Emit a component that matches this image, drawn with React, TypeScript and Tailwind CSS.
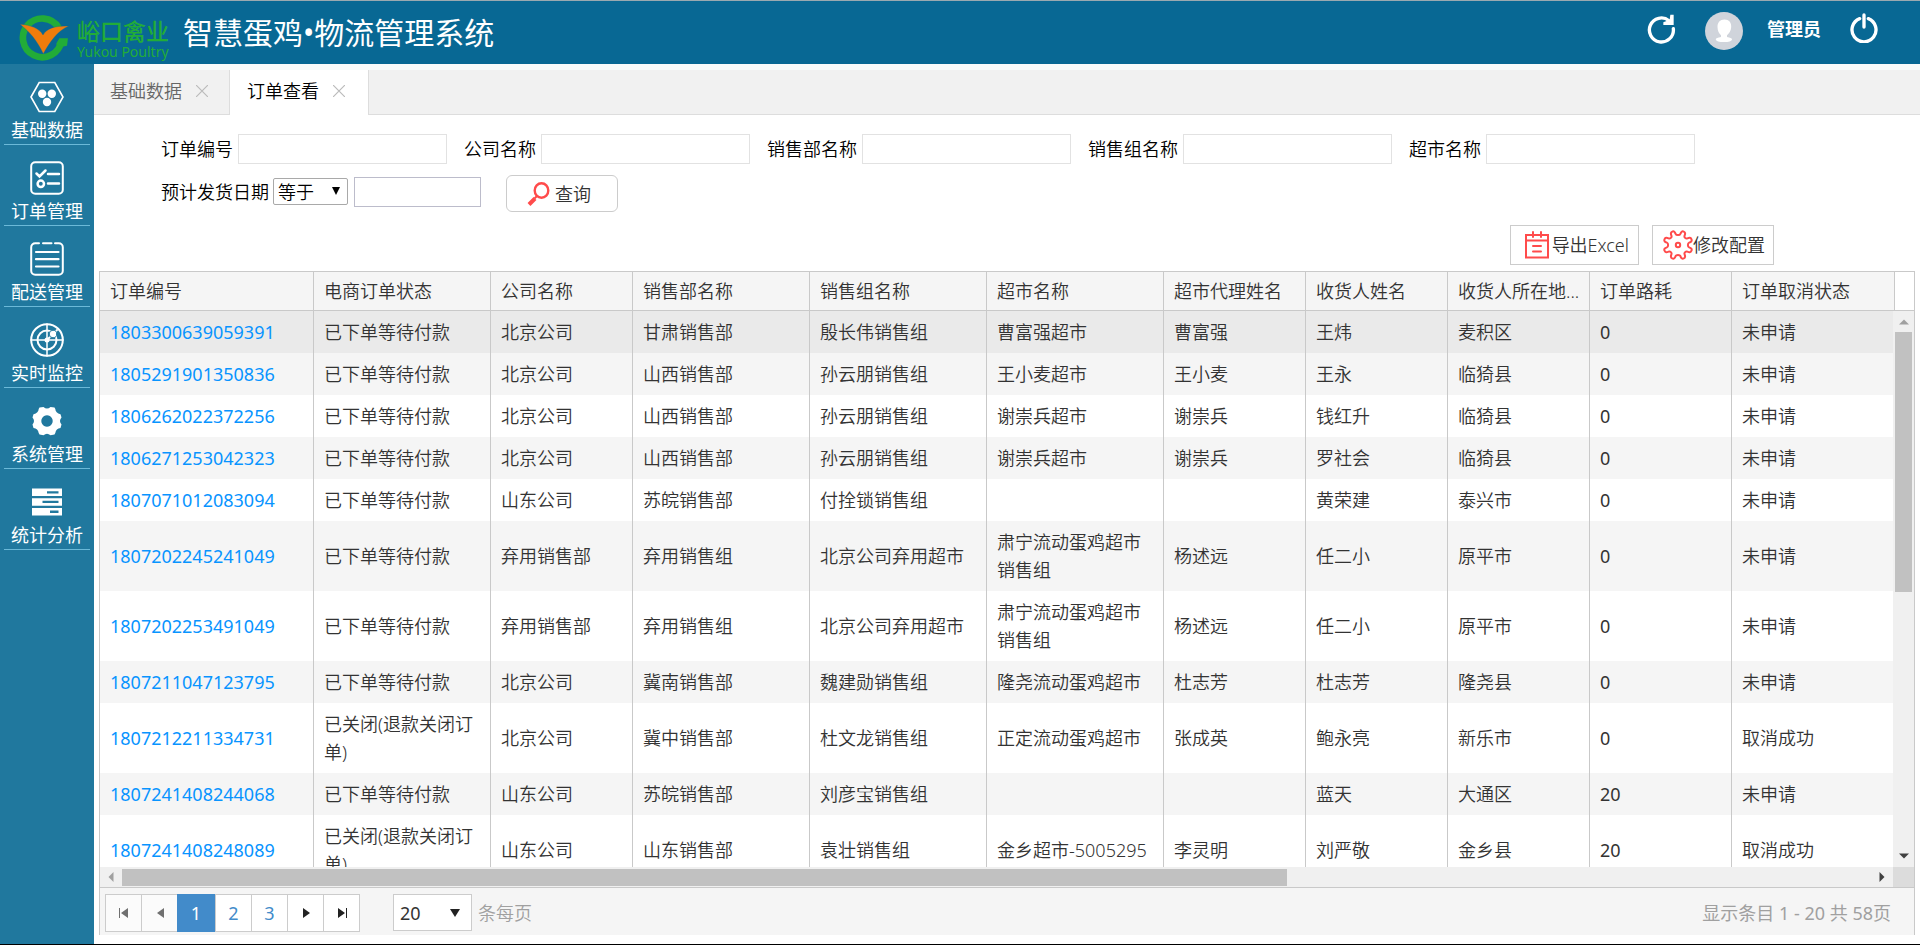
import { InputHTMLAttributes, ReactNode } from 'react'

interface Order {
  id: string
  status: string
  company: string
  department: string
  group: string
  market: string
  agent: string
  receiver: string
  region: string
  loss: number
  cancel: string
}

const columns: { key: keyof Order; title: string; width?: string; cell?: string }[] = [
  { key: 'id', title: '订单编号', width: 'w-[213px]', cell: 'font-normal' },
  { key: 'status', title: '电商订单状态', width: 'w-[177px]' },
  { key: 'company', title: '公司名称', width: 'w-[142px]' },
  { key: 'department', title: '销售部名称', width: 'w-[177px]' },
  { key: 'group', title: '销售组名称', width: 'w-[177px]' },
  { key: 'market', title: '超市名称', width: 'w-[177px]' },
  { key: 'agent', title: '超市代理姓名', width: 'w-[142px]' },
  { key: 'receiver', title: '收货人姓名', width: 'w-[142px]' },
  { key: 'region', title: '收货人所在地...', width: 'w-[142px]' },
  { key: 'loss', title: '订单路耗', width: 'w-[142px]', cell: 'font-normal' },
  { key: 'cancel', title: '订单取消状态' },
]

const WAITING = '已下单等待付款'
const CLOSED = '已关闭(退款关闭订单)'

const toOrder = (row: string[]): Order => ({
  id: row[0],
  status: row[1],
  company: row[2],
  department: row[3],
  group: row[4],
  market: row[5],
  agent: row[6],
  receiver: row[7],
  region: row[8],
  loss: Number(row[9]),
  cancel: row[10],
})

const orders = [
  ['1803300639059391', WAITING, '北京公司', '甘肃销售部', '殷长伟销售组', '曹富强超市', '曹富强', '王炜', '麦积区', '0', '未申请'],
  ['1805291901350836', WAITING, '北京公司', '山西销售部', '孙云朋销售组', '王小麦超市', '王小麦', '王永', '临猗县', '0', '未申请'],
  ['1806262022372256', WAITING, '北京公司', '山西销售部', '孙云朋销售组', '谢崇兵超市', '谢崇兵', '钱红升', '临猗县', '0', '未申请'],
  ['1806271253042323', WAITING, '北京公司', '山西销售部', '孙云朋销售组', '谢崇兵超市', '谢崇兵', '罗社会', '临猗县', '0', '未申请'],
  ['1807071012083094', WAITING, '山东公司', '苏皖销售部', '付拴锁销售组', '', '', '黄荣建', '泰兴市', '0', '未申请'],
  ['1807202245241049', WAITING, '弃用销售部', '弃用销售组', '北京公司弃用超市', '肃宁流动蛋鸡超市销售组', '杨述远', '任二小', '原平市', '0', '未申请'],
  ['1807202253491049', WAITING, '弃用销售部', '弃用销售组', '北京公司弃用超市', '肃宁流动蛋鸡超市销售组', '杨述远', '任二小', '原平市', '0', '未申请'],
  ['1807211047123795', WAITING, '北京公司', '冀南销售部', '魏建勋销售组', '隆尧流动蛋鸡超市', '杜志芳', '杜志芳', '隆尧县', '0', '未申请'],
  ['1807212211334731', CLOSED, '北京公司', '冀中销售部', '杜文龙销售组', '正定流动蛋鸡超市', '张成英', '鲍永亮', '新乐市', '0', '取消成功'],
  ['1807241408244068', WAITING, '山东公司', '苏皖销售部', '刘彦宝销售组', '', '', '蓝天', '大通区', '20', '未申请'],
  ['1807241408248089', CLOSED, '山东公司', '山东销售部', '袁壮销售组', '金乡超市-5005295', '李灵明', '刘严敬', '金乡县', '20', '取消成功'],
].map(toOrder)

const menu: { label: string; icon: ReactNode }[] = [
  {
    label: '基础数据',
    icon: (
      <>
        <path d="M1 17 9.200 2.500h15.600L33 17l-8.200 14.500H9.200z" strokeWidth="1.600" />
        <g fill="currentColor" stroke="none">
          <circle cx="12.200" cy="13.800" r="4.200" />
          <circle cx="21.800" cy="13.800" r="4.200" />
          <circle cx="17" cy="22" r="4.200" />
        </g>
      </>
    ),
  },
  {
    label: '订单管理',
    icon: (
      <>
        <rect x="1.200" y="1.200" width="31.600" height="31.600" rx="4" />
        <path d="m6.500 12.500 3 3 6-6M18 13h11M18 22.500h11" strokeWidth="2.500" />
        <circle cx="10.800" cy="22.800" r="3.200" strokeWidth="2.500" />
      </>
    ),
  },
  {
    label: '配送管理',
    icon: (
      <>
        <path d="M9 1.200H5.200a4 4 0 0 0-4 4v23.600a4 4 0 0 0 4 4h23.600a4 4 0 0 0 4-4V5.200a4 4 0 0 0-4-4H25M13 1.200h8.500" />
        <path d="M6 10h22.500M6 17.200h22.500M6 24.500h22.500" strokeWidth="2.200" />
      </>
    ),
  },
  {
    label: '实时监控',
    icon: (
      <>
        <circle cx="17" cy="17" r="15.800" />
        <circle cx="17" cy="17" r="9.500" />
        <path d="M17 1v32M1 17h32" strokeWidth="1.500" />
        <path d="m17 17 10-10" />
        <circle cx="17" cy="17" r="2.500" fill="currentColor" stroke="none" />
        <circle cx="23" cy="11" r="3.800" fill="currentColor" stroke="#20789e" strokeWidth="1" />
      </>
    ),
  },
  {
    label: '系统管理',
    icon: (
      <path
        d="M9.500 3.500 13.500 3q3.500 3 7 0l4 .5.800 1.500q.2 4 5.200 5.200l1 3.300q-3 3.500 0 7l-1 3.500q-4.500.5-5.200 5L24.500 30.500l-4 .8q-3.500-3-7 0l-4-.8-.8-1.500q-.7-4.500-5.200-5l-1-3.500q3-3.500 0-7l1-3.300Q8.500 9 8.700 5zM17 11.300a5.700 5.700 0 1 0 .01 0z"
        fill="currentColor"
        fillRule="evenodd"
        stroke="none"
      />
    ),
  },
  {
    label: '统计分析',
    icon: (
      <path
        d="M2 3.500h30V11H2zM2 13.200h30v7.500H2zM2 23h30v7.500H2zM17 6.200v2.300h11.500V6.200zM12.500 15.800v2.300h16v-2.300zM20 25.600v2.300h8.500v-2.300z"
        fill="currentColor"
        fillRule="evenodd"
        stroke="none"
      />
    ),
  },
]

const filters = [
  { id: 'orderNo', label: '订单编号' },
  { id: 'company', label: '公司名称' },
  { id: 'department', label: '销售部名称' },
  { id: 'group', label: '销售组名称' },
  { id: 'market', label: '超市名称' },
]

const Logo = () => (
  <div className="flex items-center gap-2">
    <svg viewBox="57 44 150 138" className="w-[50px] h-[46px]">
      <path d="M176 82A58 58 0 1 0 184 122" fill="none" stroke="#22ac38" strokeWidth="20" />
      <path d="M168 132 178 114h26l-3 22-18 4z" fill="#22ac38" />
      <path
        d="M60 72C92 74 118 84 129 104 140 84 165 76 206 77 172 92 150 125 130 160 110 120 90 95 60 72z"
        fill="#f07c0b"
        stroke="#086894"
        strokeWidth="1"
      />
    </svg>
    <div className="pt-1 text-[#22ac38]">
      <div className="text-[23px] leading-6 font-medium">峪口禽业</div>
      <div className="text-sm leading-[18px]">Yukou Poultry</div>
    </div>
  </div>
)

const Header = () => (
  <header className="flex items-start justify-between h-16 shrink-0 border-t border-[#9aa9b0] bg-[#086894] text-white font-normal pl-[19px] pr-[41px]">
    <div className="flex items-center gap-[14px] h-full">
      <div className="pt-2.5">
        <Logo />
      </div>
      <h1 className="text-[30px] leading-10">智慧蛋鸡•物流管理系统</h1>
    </div>
    <div className="flex items-center h-[60px]">
      <button type="button" aria-label="刷新" className="mr-7 pb-1">
        <svg viewBox="440 40 90 90" className="size-[30px]">
          <path d="M519 84A36 36 0 1 1 506 60" fill="none" stroke="currentColor" strokeWidth="10" strokeLinecap="round" />
          <path d="M489 73v-8l19-8 2-15h10v31z" fill="currentColor" />
        </svg>
      </button>
      <svg viewBox="0 0 38 38" className="size-[38px]">
        <circle cx="19" cy="19" r="19" fill="#d0d4db" />
        <path
          d="M19.500 7.500c4.500 0 7 3 6.700 7.500-.2 4-2.200 6.500-4.200 8.300v1.700c3 .4 5 1.200 5 2.500 0 1.600-3.500 2.600-8 2.600s-8.200-1-8.200-2.600c0-1.300 2-2.100 5.200-2.500v-1.700c-2-1.800-3.400-4.300-3.500-8.300-.1-4.500 2.500-7.500 7-7.500z"
          fill="#fff"
        />
      </svg>
      <span className="ml-6 pb-1 text-lg leading-6 font-bold">管理员</span>
      <button type="button" aria-label="退出" className="ml-7 pb-1.5">
        <svg viewBox="1046 36 90 90" className="size-[30px]">
          <path d="M1078 53A36 36 0 1 0 1104 53M1091 42v36" fill="none" stroke="currentColor" strokeWidth="10" strokeLinecap="round" />
        </svg>
      </button>
    </div>
  </header>
)

const Sidebar = () => (
  <nav className="w-[94px] shrink-0 bg-[#20789e] px-1 text-white font-normal">
    {menu.map(item => (
      <a
        key={item.label}
        href="#"
        className="flex flex-col items-center h-[81px] pt-4 gap-1 border-b border-[#6bb9d8] text-lg leading-6"
      >
        <svg viewBox="0 0 34 34" fill="none" stroke="currentColor" strokeWidth="2" strokeLinecap="round" className="size-[34px]">
          {item.icon}
        </svg>
        {item.label}
      </a>
    ))}
  </nav>
)

const CloseIcon = () => (
  <svg viewBox="0 0 12 12" stroke="#bbb" strokeWidth="1.200" className="size-3">
    <path d="m0 0 12 12M12 0 0 12" />
  </svg>
)

const Tab = ({ label, active }: { label: string; active?: boolean }) => (
  <div
    className={
      active
        ? 'flex items-center gap-[14px] h-[45px] pl-[17px] pr-[23px] pb-[3px] border-r border-[#ddd] bg-white text-black'
        : 'flex items-center gap-[14px] h-[45px] pl-4 pr-[21px] pb-0.5 border-r border-b border-[#ddd] text-[#666]'
    }
  >
    <button type="button" role="tab" aria-selected={!!active} className="text-lg leading-6">
      {label}
    </button>
    <button type="button" aria-label={`关闭${label}`}>
      <CloseIcon />
    </button>
  </div>
)

const Field = ({ id, label, ...props }: { label: string } & InputHTMLAttributes<HTMLInputElement>) => (
  <div className="flex items-center gap-[5px]">
    <label htmlFor={id}>{label}</label>
    <input id={id} type="text" className="w-[209px] h-[30px] border border-[#e2e2e2] bg-white px-2" {...props} />
  </div>
)

const Filters = () => (
  <form className="flex flex-col pl-[67px] pt-[19px] text-lg leading-6 text-black" onSubmit={e => e.preventDefault()}>
    <div className="flex gap-[17px]">
      {filters.map(f => (
        <Field key={f.id} {...f} />
      ))}
    </div>
    <div className="flex items-center mt-[11px]">
      <label htmlFor="dateOp" className="pb-1">
        预计发货日期
      </label>
      <div className="relative ml-1 pb-1">
        <select id="dateOp" className="block appearance-none w-[75px] h-[27px] rounded-xs border border-[#a9a9a9] bg-white pl-1 leading-6">
          <option>等于</option>
        </select>
        <svg viewBox="0 0 8 8" className="absolute right-2 top-[9px] size-2 pointer-events-none">
          <path d="M0 0h8L4 8z" />
        </svg>
      </div>
      <div className="ml-1.5 pb-1">
        <input type="text" aria-label="预计发货日期" className="block w-[127px] h-[30px] border border-[#bcbccb] px-2" />
      </div>
      <button
        type="submit"
        className="flex items-center justify-center gap-1 ml-[25px] w-28 h-[37px] pr-1.5 rounded-md border border-[#ccc] bg-white text-[#333]"
      >
        <svg viewBox="0 0 24 24" fill="none" stroke="#ff4b4b" className="size-6">
          <ellipse cx="14.500" cy="8.500" rx="6.800" ry="7.200" strokeWidth="2.400" />
          <path d="m10 14-2.500 2.500" strokeWidth="2" />
          <path d="M8 16.500 2 22.500" strokeWidth="4" />
        </svg>
        查询
      </button>
    </div>
  </form>
)

const Toolbar = () => (
  <div className="flex justify-end gap-[13px] mt-[13px] pr-[146px] text-lg leading-6 text-[#333]">
    <button type="button" className="flex items-center gap-[3px] h-10 pl-[14px] pr-[9px] border border-[#ccc]">
      <svg viewBox="0 0 24 28" fill="none" stroke="#ff4b4b" strokeWidth="2" strokeLinecap="round" className="w-6 h-7">
        <path d="M1 4h22v22.500H1zM1 9.500h22M8 1v5M16 1v5" />
        <path d="M8 15h8M8 20.500h8" />
      </svg>
      导出Excel
    </button>
    <button type="button" className="flex items-center h-10 pl-[10px] pr-2 border border-[#ccc]">
      <svg viewBox="0 0 30 30" fill="none" stroke="#ff4b4b" strokeWidth="2" strokeLinejoin="round" className="size-[30px]">
        <path d="M9.200 1.600c1.700-.9 2.700.3 3.400 2.300.6 1.600 4.200 1.600 4.800 0 .7-2 1.700-3.200 3.400-2.300 1.700.7 1.500 2.300.8 4-.7 1.700 1.200 3.500 2.800 2.800 1.800-.8 3.400-1 4 .8.900 1.700-.3 2.700-2.300 3.400-1.600.6-1.600 4.200 0 4.800 2 .7 3.200 1.700 2.300 3.400-.6 1.800-2.200 1.600-4 .8-1.600-.7-3.500 1.100-2.800 2.800.7 1.700.9 3.300-.8 4-1.700.9-2.700-.3-3.400-2.300-.6-1.600-4.200-1.600-4.800 0-.7 2-1.700 3.200-3.400 2.300-1.700-.7-1.500-2.300-.8-4 .7-1.700-1.200-3.500-2.800-2.800-1.800.8-3.400 1-4-.8-.9-1.700.3-2.700 2.300-3.400 1.600-.6 1.600-4.200 0-4.800-2-.7-3.200-1.700-2.300-3.400.6-1.800 2.200-1.600 4-.8 1.600.7 3.500-1.100 2.800-2.800-.7-1.700-.9-3.300.8-4z" />
        <circle cx="15" cy="15" r="2.200" />
      </svg>
      修改配置
    </button>
  </div>
)

const ColGroup = () => (
  <colgroup>
    {columns.map(col => (
      <col key={col.key} className={col.width} />
    ))}
  </colgroup>
)

const Arrow = ({ d, className }: { d: string; className?: string }) => (
  <svg viewBox="0 0 10 10" fill="currentColor" className={`size-2.5 ${className ?? ''}`}>
    <path d={d} />
  </svg>
)

const UP = 'M0 7.500h10L5 2.500z'
const DOWN = 'M0 2.500h10L5 7.500z'
const LEFT = 'M7.500 0v10L2.500 5z'
const RIGHT = 'M2.500 0v10L7.500 5z'

const Grid = () => (
  <div className="flex flex-col flex-1 min-h-0 mt-1.5 border border-b-0 border-[#c9c9c9] text-lg text-[#333]">
    <div className="flex shrink-0 border-b border-[#c9c9c9] pr-[19px]">
      <table className="w-full table-fixed border-separate border-spacing-0 border-r border-[#c9c9c9] bg-[#f5f5f5]">
        <ColGroup />
        <thead>
          <tr>
            {columns.map(col => (
              <th
                key={col.key}
                className="h-[38px] px-[10px] text-left leading-6 font-[350] whitespace-nowrap border-l border-[#c9c9c9] first:border-l-0"
              >
                {col.title}
              </th>
            ))}
          </tr>
        </thead>
      </table>
    </div>

    <div className="flex flex-1 min-h-0">
      <div className="flex-1 min-w-0 overflow-hidden">
        <table className="w-full table-fixed border-separate border-spacing-0">
          <ColGroup />
          <tbody>
            {orders.map((order, i) => (
              <tr key={order.id} className={i === 0 ? 'bg-[#eaeaea]' : i % 2 ? 'bg-[#f5f5f5]' : 'bg-white'}>
                {columns.map(col => (
                  <td
                    key={col.key}
                    className={`px-[10px] py-[7px] leading-7 border-l border-[#c9c9c9] first:border-l-0 ${col.cell ?? ''}`}
                  >
                    {col.key === 'id' ? (
                      <a href="#" className="text-[#0894ff]">
                        {order.id}
                      </a>
                    ) : (
                      order[col.key]
                    )}
                  </td>
                ))}
              </tr>
            ))}
          </tbody>
        </table>
      </div>
      <div className="flex flex-col items-center w-[21px] shrink-0 bg-[#f0f0f0] py-1.5">
        <Arrow d={UP} className="text-[#a0a0a0]" />
        <div className="flex-1 w-full px-0.5 pt-[5px]">
          <div className="h-1/2 bg-[#c1c1c1]" />
        </div>
        <Arrow d={DOWN} className="text-[#404040]" />
      </div>
    </div>

    <div className="flex h-5 shrink-0 bg-[#f0f0f0]">
      <div className="flex flex-1 items-center px-1.5">
        <Arrow d={LEFT} className="text-[#a0a0a0]" />
        <div className="flex-1 pl-1.5 pr-2">
          <div className="w-2/3 h-[17px] bg-[#c1c1c1]" />
        </div>
        <Arrow d={RIGHT} className="text-[#404040]" />
      </div>
      <div className="w-[21px] bg-[#dcdcdc]" />
    </div>

    <Pager />
  </div>
)

const pagerButton = 'flex items-center justify-center w-[37px] h-[38px] -mr-px border border-[#ccc]'

const Pager = () => (
  <div className="flex items-center h-12 shrink-0 border-t border-[#c9c9c9] bg-[#f5f5f5] pt-0.5 pl-[5px] pr-[23px] leading-6 font-normal">
    <button type="button" aria-label="首页" className={`${pagerButton} bg-[#fbfbfb] text-[#707070]`}>
      <Arrow d="M0 0h1v10H0zM9 0v10L2 5z" />
    </button>
    <button type="button" aria-label="上一页" className={`${pagerButton} bg-[#fbfbfb] text-[#707070]`}>
      <Arrow d="M9 0v10L2 5z" />
    </button>
    <button type="button" className="flex items-center justify-center w-[38px] h-[38px] bg-[#428bca] text-white">
      1
    </button>
    <button type="button" className={`${pagerButton} bg-white text-[#428bca]`}>
      2
    </button>
    <button type="button" className={`${pagerButton} bg-white text-[#428bca]`}>
      3
    </button>
    <button type="button" aria-label="下一页" className={`${pagerButton} bg-white text-[#222]`}>
      <Arrow d="M2 0v10l7-5z" />
    </button>
    <button type="button" aria-label="末页" className={`${pagerButton} bg-white text-[#222]`}>
      <Arrow d="M1 0v10l7-5zM9 0h1v10H9z" />
    </button>
    <div className="relative ml-[34px]">
      <select id="pageSize" className="block appearance-none w-[79px] h-[37px] border border-[#ccc] bg-white pl-1.5">
        <option>20</option>
      </select>
      <svg viewBox="0 0 10 8" className="absolute right-3 top-[15px] w-2.5 h-2 pointer-events-none">
        <path d="M0 0h10L5 8z" fill="#222" />
      </svg>
    </div>
    <label htmlFor="pageSize" className="ml-1.5 font-[350] text-[#a0a0a0]">
      条每页
    </label>
    <span className="ml-auto text-[#a0a0a0]">显示条目 1 - 20 共 58页</span>
  </div>
)

const App = () => (
  <div className="flex flex-col h-screen overflow-hidden border-b border-black bg-white font-['Noto_Sans','Noto_Sans_CJK_SC',sans-serif] font-[350]">
    <Header />
    <div className="flex flex-1 min-h-0">
      <Sidebar />
      <main className="flex flex-col flex-1 min-w-0">
        <div role="tablist" className="flex shrink-0 border-t-6 border-[#f8fbfb] bg-[#f1f1f1]">
          <Tab label="基础数据" />
          <Tab label="订单查看" active />
          <div className="flex-1 border-b border-[#ddd]" />
        </div>
        <Filters />
        <Toolbar />
        <div className="flex flex-col flex-1 min-h-0 pl-[5px] pr-[5px] pb-[9px]">
          <Grid />
        </div>
      </main>
    </div>
  </div>
)

export default App
